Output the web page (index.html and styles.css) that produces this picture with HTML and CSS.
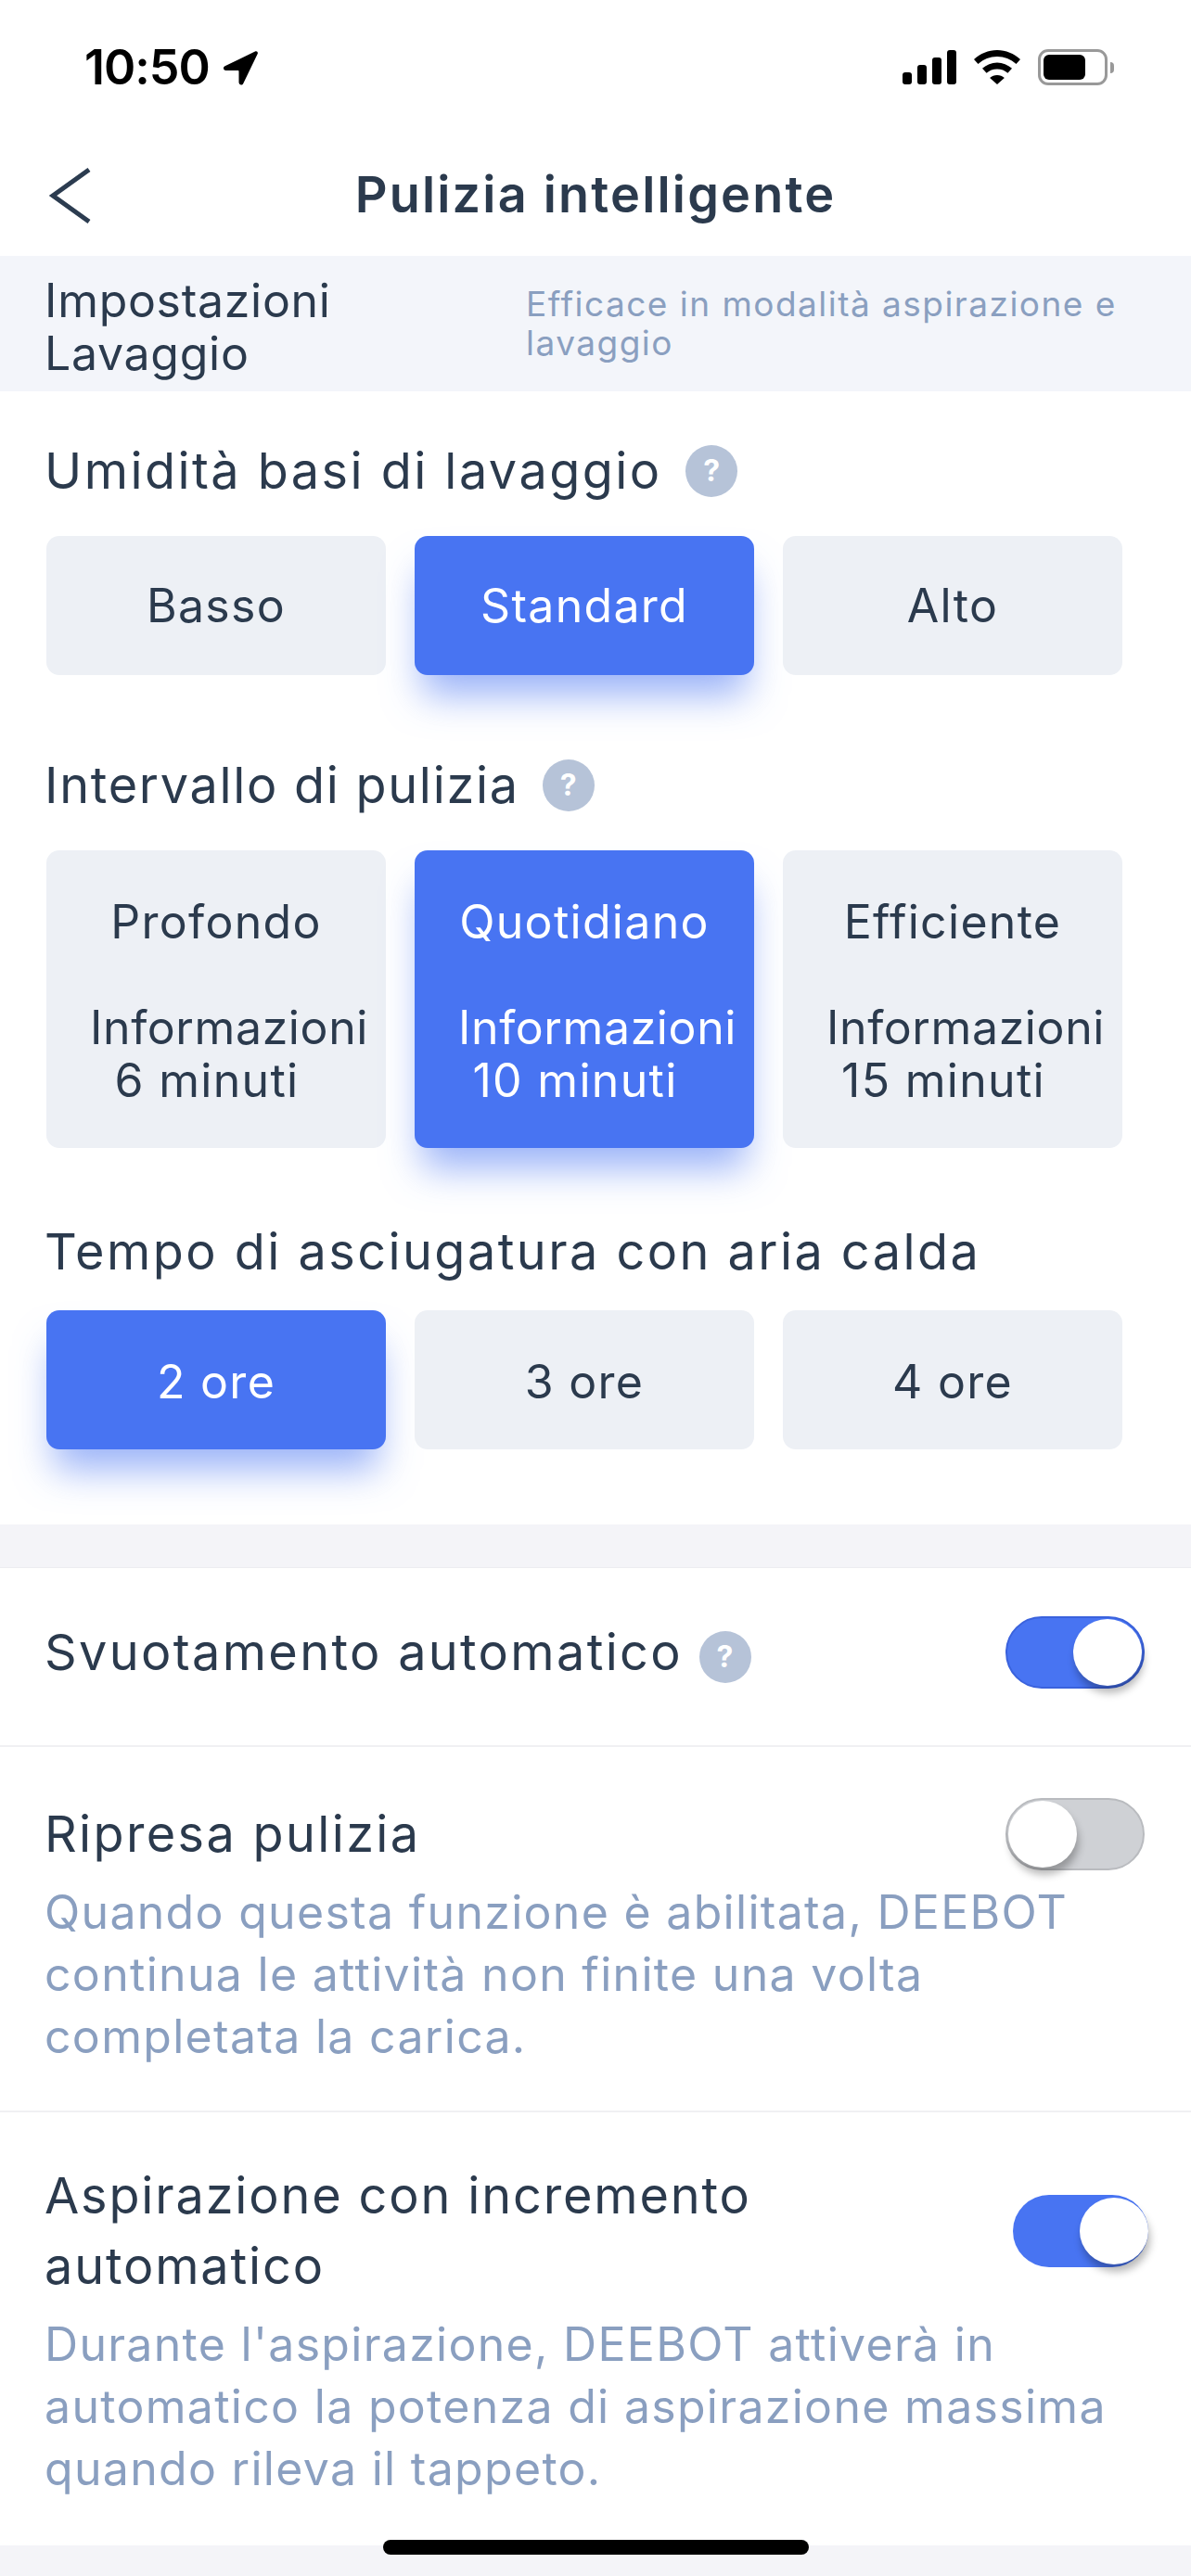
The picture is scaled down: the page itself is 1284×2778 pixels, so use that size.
FILE: index.html
```html
<!DOCTYPE html>
<html lang="it">
<head>
  <meta charset="UTF-8">
  <meta name="viewport" content="width=device-width, initial-scale=1.0">
  <title>Pulizia intelligente</title>
  <link rel="stylesheet" href="styles.css">
</head>
<body>
  <div class="status-bar">
    <div class="status-left">
      <span class="clock">10:50</span>
      <svg class="arrow-icon" width="40" height="38" viewBox="0 0 40 38"><path d="M36 1.500 3.500 17.200c-2.600 1.300-1.700 4.800 1.100 4.800H17.500c.6 0 1 .4 1 1v11.800c0 2.800 3.600 3.600 4.800 1.100L38.600 4.300c1-2-.7-3.700-2.600-2.800z" fill="#000"/></svg>
    </div>
    <div class="status-right">
      <svg width="58" height="37" viewBox="0 0 58 37"><rect x="0" y="24" width="10" height="13" rx="3"/><rect x="16" y="16" width="10" height="21" rx="3"/><rect x="32" y="8" width="10" height="29" rx="3"/><rect x="48" y="0" width="10" height="37" rx="3"/></svg>
      <svg width="50" height="37" viewBox="0 0 50 37"><path d="M25 0C15.500 0 7 3.700 0 10l4.500 5C10.300 9.800 17.300 7 25 7s14.700 2.800 20.500 8l4.500-5C43 3.700 34.500 0 25 0z"/><path d="M25 13.500c-6 0-11.500 2.300-16 6.300l4.600 5c3.100-2.800 7-4.300 11.400-4.300s8.300 1.500 11.400 4.300l4.600-5c-4.500-4-10-6.300-16-6.300z"/><path d="M25 27c-3 0-5.700 1-7.900 3L25 37l7.900-7c-2.200-2-4.900-3-7.900-3z"/></svg>
      <div class="battery"><div class="battery-level"></div></div>
      <div class="battery-nub"></div>
    </div>
  </div>

  <div class="nav">
    <svg class="back" width="46" height="60" viewBox="0 0 46 60"><path d="M44 2 5 30l39 28" fill="none" stroke="#2c3c50" stroke-width="5"/></svg>
    <h1>Pulizia intelligente</h1>
  </div>

  <div class="band">
    <div class="band-title">Impostazioni<br>Lavaggio</div>
    <div class="band-note">Efficace in modalità aspirazione e lavaggio</div>
  </div>

  <div class="panel">
    <div class="label">Umidità basi di lavaggio <span class="help">?</span></div>
    <div class="options">
      <div class="option">Basso</div>
      <div class="option active">Standard</div>
      <div class="option">Alto</div>
    </div>

    <div class="label narrow">Intervallo di pulizia <span class="help">?</span></div>
    <div class="options tall">
      <div class="option">
        <div class="opt-name">Profondo</div>
        <div class="opt-info">Informazioni</div>
        <div class="opt-time">6 minuti</div>
      </div>
      <div class="option active">
        <div class="opt-name">Quotidiano</div>
        <div class="opt-info">Informazioni</div>
        <div class="opt-time">10 minuti</div>
      </div>
      <div class="option">
        <div class="opt-name">Efficiente</div>
        <div class="opt-info">Informazioni</div>
        <div class="opt-time">15 minuti</div>
      </div>
    </div>

    <div class="label">Tempo di asciugatura con aria calda</div>
    <div class="options close">
      <div class="option active">2 ore</div>
      <div class="option">3 ore</div>
      <div class="option">4 ore</div>
    </div>
  </div>

  <div class="gap"></div>

  <div class="row row-short">
    <div class="row-head">
      <div class="row-title">Svuotamento automatico <span class="help low">?</span></div>
      <div class="toggle on"><div class="knob"></div></div>
    </div>
  </div>

  <div class="row row-resume">
    <div class="row-head">
      <div class="row-title">Ripresa pulizia</div>
      <div class="toggle"><div class="knob"></div></div>
    </div>
    <p class="row-note">Quando questa funzione è abilitata, DEEBOT continua le attività non finite una volta completata la carica.</p>
  </div>

  <div class="row row-boost">
    <div class="row-head">
      <div class="row-title wide">Aspirazione con incremento automatico</div>
      <div class="toggle on plain"><div class="knob"></div></div>
    </div>
    <p class="row-note">Durante l'aspirazione, DEEBOT attiverà in automatico la potenza di aspirazione massima quando rileva il tappeto.</p>
  </div>

  <div class="foot"><div class="home-bar"></div></div>
</body>
</html>
```

FILE: styles.css
```css
* {
  box-sizing: border-box;
}
body {
  margin: 0;
  width: 1284px;
  height: 2778px;
  overflow: hidden;
  background-color: #fff;
  color: #2b3a4d;
  font-family: Inter, "Noto Sans", sans-serif;
  font-weight: 400;
}
.status-bar {
  height: 100px;
  padding: 53px 83px 0 91px;
  display: flex;
  justify-content: space-between;
  align-items: flex-start;
}
.status-left {
  display: flex;
  align-items: center;
  gap: 13px;
  height: 39px;
}
.clock {
  font-size: 52px;
  font-weight: 600;
  color: #000;
  line-height: 39px;
  letter-spacing: -1px;
}
.status-right {
  display: flex;
  align-items: center;
  gap: 19px;
  height: 39px;
}
.battery {
  width: 75px;
  height: 39px;
  border: 3px solid #999;
  border-radius: 11px;
  padding: 3px;
  margin-right: -16px;
}
.battery-level {
  width: 45px;
  height: 27px;
  background-color: #000;
  border-radius: 6px;
}
.battery-nub {
  width: 4px;
  height: 12px;
  background-color: #999;
  border-radius: 0 4px 4px 0;
}
.nav {
  height: 176px;
  display: flex;
  align-items: center;
  justify-content: center;
  position: relative;
  padding-top: 43px;
}
.nav h1 {
  margin: 0;
  font-size: 54px;
  font-weight: 600;
  letter-spacing: 2.2px;
}
.back {
  position: absolute;
  left: 52px;
  top: 81px;
}
.band {
  height: 146px;
  background-color: #f3f5fa;
  padding: 20px 50px 0;
  display: flex;
}
.band-title {
  width: 517px;
  margin-left: -2px;
  margin-right: 2px;
  font-size: 50px;
  line-height: 57px;
  letter-spacing: 0.7px;
  flex: none;
}
.band-note {
  width: 660px;
  padding-top: 11px;
  font-size: 37px;
  line-height: 42px;
  letter-spacing: 1.47px;
  color: #8a9fc0;
}
.panel {
  height: 1222px;
  padding: 50px 74px 0 50px;
}
.label {
  height: 72px;
  margin-left: -2px;
  font-size: 54px;
  line-height: 72px;
  letter-spacing: 2.45px;
  display: flex;
  align-items: center;
  gap: 8px;
  white-space: pre;
}
.label.narrow {
  letter-spacing: 1.7px;
}
.help {
  width: 56px;
  height: 56px;
  flex: none;
  border-radius: 50%;
  background-color: #b6c3d8;
  color: #fff;
  font-size: 32px;
  font-weight: 700;
  letter-spacing: 0;
  line-height: 56px;
  text-align: center;
  display: inline-block;
}
.help.low {
  margin-top: 10px;
}
.options {
  margin-top: 34px;
  margin-bottom: 83px;
  margin-left: 0;
  display: grid;
  grid-template-columns: repeat(3, 366px);
  gap: 31px;
}
.options.close {
  margin-top: 27px;
}
.options.close .option {
  padding-top: 3px;
}
.option {
  height: 150px;
  background-color: #edf0f5;
  border-radius: 14px;
  font-size: 50px;
  letter-spacing: 1.3px;
  display: flex;
  align-items: center;
  justify-content: center;
}
.option.active {
  background-color: #4874f2;
  color: #fff;
  box-shadow: 0 30px 40px -8px rgba(72, 116, 242, 0.55);
}
.tall {
  margin-bottom: 76px;
}
.tall .option {
  height: 321px;
  display: block;
  text-align: center;
  line-height: 57px;
  white-space: nowrap;
  padding-top: 49px;
}
.opt-name {
  margin-bottom: 57px;
}
.opt-info {
  padding-left: 22px;
  margin-right: -6px;
  letter-spacing: 0.6px;
}
.opt-time {
  padding-right: 20px;
}
.gap {
  height: 47px;
  background-color: #f4f4f8;
  border-bottom: 1px solid #ececf0;
}
.row {
  border-bottom: 2px solid #f0f0f3;
  padding: 0 50px;
}
.row-short {
  height: 193px;
  padding-bottom: 10px;
  display: flex;
  align-items: center;
}
.row-resume {
  height: 394px;
  padding-top: 55px;
}
.row-boost {
  height: 467px;
  padding-top: 52px;
  border-bottom: none;
}
.row-head {
  width: 100%;
  display: flex;
  justify-content: space-between;
  align-items: center;
}
.row-title {
  margin-left: -2px;
  font-size: 54px;
  line-height: 76px;
  letter-spacing: 2.35px;
  display: flex;
  align-items: center;
  white-space: pre;
}
.row-title.wide {
  display: block;
  width: 900px;
  letter-spacing: 1.85px;
  white-space: normal;
}
.toggle {
  width: 150px;
  height: 78px;
  flex: none;
  border-radius: 39px;
  background-color: #cfd1d5;
  border: 2px solid #b9bbbf;
  padding: 1px;
  display: flex;
}
.toggle.on {
  background-color: #4874f2;
  border-color: #3a62dd;
  justify-content: flex-end;
}
.toggle.plain {
  width: 146px;
  margin-right: -4px;
  border: 0;
  padding: 3px 0;
}
.knob {
  width: 74px;
  height: 72px;
  border-radius: 50%;
  background-color: #fff;
  box-shadow: 2px 8px 8px rgba(0, 0, 0, 0.28);
}
.row-note {
  margin: 12px 0 0 -2px;
  font-size: 50px;
  line-height: 67px;
  letter-spacing: 1.3px;
  color: #8a9fc0;
}
.row-boost .row-note {
  margin-top: 13px;
}
.foot {
  height: 33px;
  background-color: #f4f4f8;
  display: flex;
  justify-content: center;
}
.home-bar {
  width: 459px;
  height: 16px;
  margin-top: -6px;
  background-color: #000;
  border-radius: 8px;
}
```
